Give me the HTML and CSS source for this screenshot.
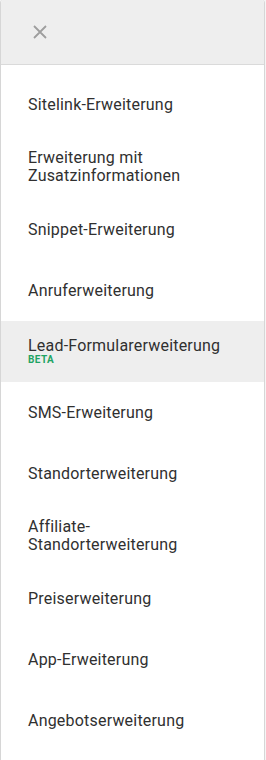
FILE: index.html
```html
<!DOCTYPE html>
<html lang="de">

<head>
    <meta charset="UTF-8">
    <meta name="viewport" content="width=device-width, initial-scale=1.0">
    <title>Erweiterungen</title>
    <link rel="stylesheet" href="styles.css">
</head>

<body>
    <div class="panel">
        <div class="topo">
            <button class="fechar" aria-label="Schließen">
                <svg width="14" height="14" viewBox="0 0 14 14">
                    <path d="M1 1 L13 13 M13 1 L1 13" stroke="#9e9e9e" stroke-width="1.8" fill="none" />
                </svg>
            </button>
        </div>

        <ul class="lista">
            <li class="item">Sitelink-Erweiterung</li>
            <li class="item">Erweiterung mit Zusatzinformationen</li>
            <li class="item">Snippet-Erweiterung</li>
            <li class="item">Anruferweiterung</li>
            <li class="item ativo">Lead-Formularerweiterung<span class="beta">BETA</span></li>
            <li class="item">SMS-Erweiterung</li>
            <li class="item">Standorterweiterung</li>
            <li class="item">Affiliate-<br>Standorterweiterung</li>
            <li class="item">Preiserweiterung</li>
            <li class="item">App-Erweiterung</li>
            <li class="item">Angebotserweiterung</li>
        </ul>
    </div>
</body>

</html>
```

FILE: styles.css
```css
* {
    box-sizing: border-box;
}

body {
    margin: 0;
    background-color: #f5f5f5;
    font-family: Roboto, "Noto Sans", Arial, sans-serif;
    color: #303030;
}

.panel {
    width: 265px;
    height: 760px;
    background-color: #ffffff;
    border-left: 1px solid #d6d6d6;
    border-right: 1px solid #d6d6d6;
    border-radius: 3px 3px 0 0;
    overflow: hidden;
}

.topo {
    height: 65px;
    background-color: #eeeeee;
    border-bottom: 1px solid #dadada;
    display: flex;
    align-items: center;
    padding-left: 32px;
}

.fechar {
    border: none;
    background: none;
    padding: 0;
    width: 14px;
    height: 14px;
    cursor: pointer;
}

.fechar svg {
    display: block;
}

.lista {
    list-style: none;
    margin: 0;
    padding: 9px 0 0;
}

.item {
    min-height: 61px;
    padding: 14px 12px 14px 27px;
    display: flex;
    flex-direction: column;
    justify-content: center;
    font-size: 16px;
    line-height: 18px;
    letter-spacing: 0.2px;
}

.ativo {
    background-color: #eeeeee;
}

.beta {
    font-size: 10px;
    line-height: 12px;
    font-weight: bold;
    color: #1fa463;
    letter-spacing: 0.4px;
    margin-top: -1px;
}
```
